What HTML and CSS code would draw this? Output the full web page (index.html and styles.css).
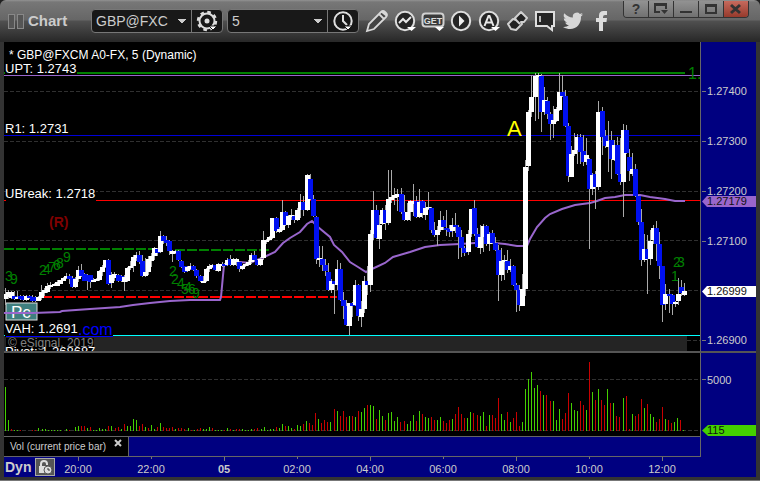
FILE: index.html
```html
<!DOCTYPE html>
<html lang="en">
<head>
<meta charset="utf-8">
<title>Chart</title>
<link rel="stylesheet" href="styles.css">
</head>
<body>
<main class="window">
  <header class="titlebar">
    <div class="brand"><span class="grip"></span><span class="grip"></span><h1>Chart</h1></div>
    <div class="combo">
      <select class="combo-select" aria-label="Symbol"><option>GBP@FXC</option></select>
      <button class="combo-button" aria-label="Symbol settings">
        <svg width="24" height="22" viewBox="0 0 24 22"><circle cx="12" cy="11" r="7.5" fill="none" stroke="#ddd" stroke-width="2"/><circle cx="12" cy="11" r="9" fill="none" stroke="#ddd" stroke-width="2.4" stroke-dasharray="3.6 3.47"/><circle cx="12" cy="11" r="2.5" fill="#ddd"/><path d="M14 16h8l-4 4z" fill="#fff" stroke="#181818"/></svg>
      </button>
    </div>
    <div class="combo">
      <select class="combo-select" aria-label="Interval"><option>5</option></select>
      <button class="combo-button" aria-label="Time template">
        <svg width="24" height="22" viewBox="0 0 24 22"><circle cx="12" cy="11" r="8.7" fill="none" stroke="#e0e0e0" stroke-width="2"/><path d="M12 5v6l4 4" fill="none" stroke="#e0e0e0" stroke-width="2"/><path d="M13 16h8l-4 4z" fill="#fff" stroke="#181818"/></svg>
      </button>
    </div>
    <nav class="tools" aria-label="Chart tools">
      <button class="tool" aria-label="Draw"><svg width="24" height="24" viewBox="0 0 24 24"><path d="M2 22l2-7L16 3q2-2 4 0l1 1q2 2 0 4L9 20zM14 5l5 5M17 3l5 4" fill="#444" stroke="#d8d8d8" stroke-width="1.8"/></svg></button>
      <button class="tool" aria-label="Studies"><svg width="24" height="24" viewBox="0 0 24 24"><circle cx="12" cy="12" r="9.2" fill="#252525" stroke="#ddd" stroke-width="2"/><path d="M6 14l4-4 3 3 5-5" fill="none" stroke="#e8e8e8" stroke-width="2"/><path d="M14 18h9l-4.500 4z" fill="#fff"/></svg></button>
      <button class="tool" aria-label="Advanced GET"><svg width="24" height="24" viewBox="0 0 24 24"><rect x="1.500" y="4.500" width="21" height="13" rx="3" fill="#3a3a3a" stroke="#d0d0d0" stroke-width="2"/><text x="12" y="15" text-anchor="middle" class="get-mark">GET</text><path d="M14 18h9l-4.500 4z" fill="#fff"/></svg></button>
      <button class="tool" aria-label="Play"><svg width="24" height="24" viewBox="0 0 24 24"><circle cx="12" cy="12" r="9.2" fill="#252525" stroke="#ddd" stroke-width="2"/><path d="M10 6.500l5.500 5.500-5.500 5.500z" fill="#eee"/></svg></button>
      <button class="tool" aria-label="Alerts"><svg width="24" height="24" viewBox="0 0 24 24"><circle cx="12" cy="12" r="9.200" fill="#252525" stroke="#ddd" stroke-width="2"/><path d="M7.500 17L11.500 7h1l4 10M9 13.500h6" fill="none" stroke="#e8e8e8" stroke-width="2"/><path d="M14 18h9l-4.500 4z" fill="#fff"/></svg></button>
      <button class="tool" aria-label="Scroll direction"><svg width="24" height="24" viewBox="0 0 24 24"><path d="M3 15l5-5 3 1-1-2 6-6 6 6-3 4h-3l1 2-6 6-5-1z" fill="#222" stroke="#d0d0d0" stroke-width="2" stroke-linejoin="round"/><path d="M11 11l4 4" stroke="#d0d0d0" stroke-width="2"/></svg></button>
      <button class="tool" aria-label="Notes"><svg width="24" height="24" viewBox="0 0 24 24"><path d="M3 3h18v14h-2v4l-5-4H3z" fill="#252525" stroke="#ddd" stroke-width="2"/><path d="M7 7v6" stroke="#eee" stroke-width="1.500"/></svg></button>
      <button class="tool" aria-label="Twitter"><svg width="24" height="24" viewBox="0 0 24 24"><path d="M22 5.500c-.8.300-1.500.5-2.300.6.800-.5 1.500-1.300 1.800-2.200-.8.500-1.700.8-2.600 1a4.100 4.100 0 0 0-7 3.700C8.500 8.400 5.500 6.800 3.400 4.300a4.100 4.100 0 0 0 1.300 5.500c-.7 0-1.300-.2-1.900-.5 0 2 1.400 3.700 3.300 4.100-.6.200-1.200.2-1.900.1.500 1.600 2 2.800 3.800 2.800A8.300 8.300 0 0 1 2 18c10 5.500 18.500-1 18-10.500.8-.5 1.500-1.200 2-2z" fill="#d6d6d6"/></svg></button>
      <button class="tool" aria-label="Facebook"><svg width="24" height="24" viewBox="0 0 24 24"><path d="M10 22v-9H7V9h3V6.500Q10 2 14.500 2H18v4h-2q-2 0-2 2v1h4l-.500 4H14v9z" fill="#ddd"/></svg></button>
    </nav>
    <div class="window-buttons">
      <button class="wbtn" aria-label="Help">?</button>
      <button class="wbtn" aria-label="Undock"><svg width="14" height="12" viewBox="0 0 14 12"><path d="M6 9H1V1h11v5M1 2h11" fill="none" stroke="#333" stroke-width="2"/><path d="M7 7h7l-3.500 4z" fill="#333"/></svg></button>
      <button class="wbtn" aria-label="Minimize"><svg width="14" height="12" viewBox="0 0 14 12"><path d="M1 9h12" stroke="#333" stroke-width="2"/></svg></button>
      <button class="wbtn" aria-label="Maximize"><svg width="14" height="12" viewBox="0 0 14 12"><path d="M2 2h10v8H2zM2 3h10" fill="none" stroke="#333" stroke-width="2"/></svg></button>
      <button class="wbtn close" aria-label="Close"><svg width="14" height="12" viewBox="0 0 14 12"><path d="M2 2l9 8M11 2l-9 8" stroke="#333" stroke-width="3"/></svg></button>
    </div>
  </header>

  <section class="chart">
    <svg class="price-plot" role="img" aria-label="Price chart">
      <g transform="translate(-4 -42)">
        <rect x="4" y="336" width="683" height="15" fill="#242424"/>
        <g class="grid"><path d="M4 91.500H2000M4 141.500H2000M4 191.500H2000M4 240.500H2000M4 290.500H2000M687 340.500H2000"/></g>
        <path d="M4 135.500H2000" stroke="#0000d8"/>
        <path d="M4 75.500H2000" stroke="#9966cc"/>
        <path d="M4 73H685" stroke="#008000" stroke-width="2"/>
        <path d="M4 200.500H2000" stroke="#f00"/>
        <path d="M4 335.500H2000" stroke="#0ff"/>
        <path d="M4 249H157M175 250H269" stroke="#008000" stroke-width="2" stroke-dasharray="10 2"/>
        <path d="M42 297H337" stroke="#f00" stroke-width="2" stroke-dasharray="10 2"/>
        <rect x="6" y="303" width="31" height="17" fill="#3f7f7f" stroke="#ddd"/>
        <text x="11" y="318" class="pc">Pc</text>
        <polyline class="average" points="4,313 33,313 60,312 62,311 90,309 120,307 133,305 150,303 170,301 190,300 220,300 221,297 224,265 230,262 240,262 250,263 262,258 275,252 283,243 290,238 300,232 307,224 312,221 318,227 330,237 334,245 342,252 350,262 358,267 366,272 372,269 385,263 393,257 410,252 425,247 440,245 460,244 475,243 495,243 505,244 517,246 527,246 530,239 537,227 545,218 550,214 562,209 575,205 590,203 597,201 605,198 615,197 625,195 640,195 650,197 665,199 675,201 685,201"/>
        <g id="candles" shape-rendering="crispEdges"></g>
        <g class="count">
          <text x="5" y="281">3</text><text x="10" y="284">9</text>
          <text x="39" y="275">2</text><text x="43" y="274">4</text><text x="48" y="272">7</text><text x="53" y="270">6</text><text x="56" y="268">8</text><text x="63" y="262">9</text>
          <text x="169" y="276">2</text><text x="171" y="284">2</text><text x="177" y="288">4</text><text x="181" y="294">5</text><text x="184" y="292">4</text><text x="188" y="294">6</text><text x="192" y="298">9</text>
          <text x="673" y="267">2</text><text x="677" y="267">3</text><text x="671" y="281">1</text>
        </g>
        <text x="688" y="79" class="count-end">1.</text>
        <text x="49" y="227" class="range">(R)</text>
        <text x="507" y="136" class="wave">A</text>
        <rect x="5" y="61" width="72" height="14"/>
        <rect x="6" y="186" width="90" height="16"/>
        <rect x="5" y="321" width="108" height="16"/>
        <rect x="6" y="338" width="88" height="13"/>
        <g class="level">
          <text x="9" y="59" class="heading">* GBP@FXCM A0-FX, 5 (Dynamic)</text>
          <text x="5" y="73">UPT: 1.2743</text>
          <text x="5" y="133">R1: 1.2731</text>
          <text x="5" y="198">UBreak: 1.2718</text>
          <text x="5" y="333">VAH: 1.2691</text>
          <text x="5" y="356">Pivot: 1.268687</text>
        </g>
        <a href="#site"><text x="78" y="335" class="site">.com</text><path d="M6 336.500H113" stroke="#00f"/></a>
        <text x="8" y="347" class="copyright">© eSignal, 2019</text>
      </g>
    </svg>
    <svg class="price-axis" role="img" aria-label="Price axis">
      <g transform="translate(-701 -42)">
        <path d="M702 91.500h4M702 141.500h4M702 191.500h4M702 241.500h4M702 340.500h4" stroke="#777"/>
        <g class="scale">
          <text x="707" y="95">1.27400</text><text x="707" y="145">1.27300</text><text x="707" y="195">1.27200</text><text x="707" y="245">1.27100</text><text x="707" y="344">1.26900</text>
        </g>
        <path d="M702 201.500l5-5.500h2000v11h-2000z" fill="#9966cc"/>
        <path d="M702 291.500l5-5.500h2000v11h-2000z" fill="#fff"/>
        <g class="scale dark"><text x="707" y="205">1.27179</text><text x="707" y="295">1.26999</text></g>
      </g>
    </svg>
    <svg class="volume-plot" role="img" aria-label="Volume">
      <g transform="translate(-4 -353)">
        <g class="grid"><path d="M4 379.500H2000M4 430.500H2000"/></g>
        <g id="volume" shape-rendering="crispEdges"></g>
      </g>
    </svg>
    <svg class="volume-axis" role="img" aria-label="Volume axis">
      <g transform="translate(-701 -353)">
        <path d="M702 379.500h4" stroke="#777"/>
        <path d="M702 430.500l6-5.500h2000v11h-2000z" fill="#44d000"/>
        <text x="707" y="384" class="scale">5000</text><text x="707" y="434" class="scale dark">115</text>
      </g>
    </svg>
    <div class="tabs"><div class="tab"><span>Vol (current price bar)</span><button class="tab-close" aria-label="Remove study"><svg width="8" height="8" viewBox="0 0 8 8"><path d="M1 1l6 6M7 1L1 7" stroke="#ccc" stroke-width="2"/></svg></button></div></div>
    <div class="axis-fill"></div>
  </section>

  <footer class="timebar">
    <strong class="mode">Dyn</strong>
    <button class="lock" aria-label="Lock time"><svg width="16" height="16" viewBox="0 0 16 16"><path d="M4 7V5q0-3 3-3t3 3v1" fill="none" stroke="#ddd" stroke-width="2"/><rect x="2" y="7" width="8" height="7" fill="#ddd"/><circle cx="11" cy="11" r="4" fill="#ddd" stroke="#555"/><path d="M11 9v2h2" fill="none" stroke="#333"/></svg></button>
    <svg class="times" role="img" aria-label="Time axis"><g id="times" transform="translate(-55 -457)"></g></svg>
  </footer>
</main>
<script src="chart.js"></script>
</body>
</html>
```
FILE: styles.css
```css
* { box-sizing: border-box; }
html { height: 100%; background: #202020; }
body { margin: 0; height: 100%; font-family: "Liberation Sans", Arial, sans-serif; }
button, select { font: inherit; border: 0; padding: 0; margin: 0; background: none; color: inherit; }
svg { display: block; }

.window { display: flex; flex-direction: column; min-height: 100%; background: #333; border-bottom: 1px solid #777; border-radius: 6px 6px 0 0; overflow: hidden; }

.titlebar { display: flex; align-items: center; height: 42px; padding-right: 11px; background: linear-gradient(#929292 0, #777 2px, #666 20px, #505050 21px, #292929 41px); }
.brand { display: flex; align-items: center; gap: 2px; width: 91px; padding-left: 8px; }
.grip { width: 7px; height: 15px; border: 1px solid #888; background: #555; }
.brand h1 { margin: 0 0 0 2px; font-size: 15px; line-height: 20px; color: #ccc; }
.combo { display: flex; width: 132px; height: 24px; margin-right: 4px; border: 1px solid #777; border-radius: 4px; background: #181818; overflow: hidden; }
.combo-select { flex: 1; min-width: 0; padding: 0 4px; appearance: none; color: #ccc; font-size: 14px; background: linear-gradient(to bottom right, #ccc 50%, transparent 51%) 90px 9px / 4px 4px no-repeat, linear-gradient(to bottom left, #ccc 50%, transparent 51%) 86px 9px / 4px 4px no-repeat; }
.combo-button { display: flex; align-items: center; justify-content: center; width: 31px; border-left: 1px solid #777; }
.tools { display: flex; }
.tool { display: flex; align-items: center; justify-content: center; width: 28px; height: 28px; }
.get-mark { font-size: 9px; font-weight: bold; fill: #ddd; }
.window-buttons { display: flex; align-self: flex-start; margin: 1px 0 0 auto; border: 1px solid #333; border-top: 0; border-radius: 0 0 4px 4px; overflow: hidden; }
.wbtn { display: flex; align-items: center; justify-content: center; width: 25px; height: 16px; border-right: 1px solid #333; background: linear-gradient(#929292, #717171); color: #333; font-size: 14px; font-weight: bold; line-height: 16px; }
.close { width: 24px; border-right: 0; background: linear-gradient(#c66a5d, #963a2c); }

.chart { display: grid; grid-template-columns: minmax(0, 1fr) 55px; margin: 0 4px; }
.price-plot, .price-axis { width: 100%; height: 311px; border-bottom: 2px solid #555; }
.volume-plot, .volume-axis { width: 100%; height: 83px; }
.price-plot, .volume-plot { background: #000; border-right: 1px solid #666; }
.price-axis, .volume-axis, .axis-fill { background: #000080; }
.tabs { display: flex; height: 21px; border: solid #666; border-width: 1px 1px 1px 0; background: #000080; }
.tab { display: flex; gap: 8px; width: 125px; padding-left: 6px; border-right: 1px solid #666; background: #000; color: #ccc; font-size: 10px; line-height: 20px; white-space: nowrap; }
.tab-close { align-self: flex-start; margin-top: 2px; }
.timebar { display: flex; align-items: center; height: 20px; margin: 0 4px 3px; background: #000080; color: #ccc; }
.mode { width: 31px; padding-left: 1px; font-size: 14px; line-height: 20px; }
.lock { display: flex; align-items: center; justify-content: center; width: 20px; height: 18px; border: 1px solid #aaa; background: #555; }
.times { flex: 1; height: 20px; }

.price-plot path, .volume-plot path { fill: none; }
.grid { stroke: #303030; stroke-dasharray: 4 2; }
.average { fill: none; stroke: #9966cc; stroke-width: 2; }
.wick { fill: #aaa; }
.up { fill: #fff; }
.down { fill: #0010f0; }
.buy { fill: #44d000; }
.sell { fill: #c80000; }
.tick { fill: #777; }
.level { fill: #fff; font-size: 13px; }
.heading { font-size: 12px; }
.count { fill: #008000; font-size: 14px; }
.count-end { fill: #008000; font-size: 16px; }
.range { fill: #800000; font-size: 14px; font-weight: bold; }
.wave { fill: #ff0; font-size: 22px; }
.pc { fill: #fff; font-size: 17px; }
.site { fill: #00f; font-size: 16px; }
.copyright { fill: #808080; font-size: 12px; }
.scale, .time { fill: #ccc; font-size: 11px; }
.dark { fill: #111; }
.time { text-anchor: middle; }
.day { font-weight: bold; }
```
FILE: chart.js
```js
// Candle rows: x, high, body top, body bottom, low, direction (1 up, 0 down)
const candles = `
5 288 294 299 305 1;8 290 292 297 299 1;11 291 292 298 299 1;14 291 296 299 300 0;17 291 297 299 299 1;20 295 296 299 300 0;23 295 296 300 301 0;26 295 296 300 301 1;29 295 296 298 299 0;32 295 297 301 302 0;35 296 297 301 302 0;38 296 297 301 301 1;41 285 292 298 300 1;44 288 290 293 296 1;47 283 286 292 293 1;50 282 285 287 289 1;54 283 284 286 286 1;57 280 282 286 286 1;60 280 280 284 284 1;63 277 278 281 281 1;66 273 276 278 279 1;69 274 276 279 284 0;72 276 278 287 288 0;75 277 279 287 288 1;78 266 270 279 282 1;81 264 270 276 277 0;84 273 274 281 281 0;87 274 275 281 290 0;90 275 275 282 288 0;93 278 280 282 282 1;96 278 279 281 281 1;99 270 271 280 281 1;102 265 267 272 276 1;105 260 260 267 268 1;108 259 260 284 285 0;111 272 275 283 288 1;114 272 274 278 281 1;118 274 275 281 282 0;121 275 276 281 282 0;124 275 277 282 291 1;127 267 268 281 282 1;130 261 266 268 270 1;
133 255 257 266 272 1;136 252 255 258 261 1;139 251 255 262 264 0;142 255 261 276 277 0;145 258 272 276 277 1;148 256 259 272 275 1;151 253 256 261 267 1;154 247 248 256 260 1;157 248 249 253 256 0;160 231 236 252 253 1;163 235 236 241 244 0;166 236 240 243 246 0;169 240 241 251 255 0;172 250 251 254 262 1;175 250 251 253 254 1;178 250 251 260 261 0;181 260 261 267 268 0;184 266 266 272 273 0;187 266 267 271 272 1;190 263 266 269 270 1;193 265 266 270 271 0;196 269 270 276 278 0;200 275 276 281 282 0;203 276 281 283 283 1;206 268 269 281 282 1;209 264 266 269 272 1;212 264 265 267 268 1;215 265 265 270 271 0;218 263 264 271 272 1;222 262 264 266 267 1;224 263 264 266 267 0;227 258 260 265 266 1;230 255 259 265 266 0;233 258 259 265 266 1;236 258 259 262 266 1;239 261 262 269 272 0;242 265 266 269 270 1;245 263 264 266 267 1;248 260 262 265 266 1;251 253 255 262 264 1;254 251 255 260 261 0;257 259 260 265 266 0;260 257 259 265 266 1;
263 231 240 258 260 1;266 239 240 242 244 1;269 236 237 240 241 1;272 218 218 238 239 1;276 217 218 231 233 0;279 227 229 232 233 1;282 200 212 230 231 1;285 211 212 225 226 0;288 215 216 225 228 1;291 209 215 217 220 1;294 215 216 220 223 0;297 208 210 220 221 1;300 194 202 210 218 1;303 196 202 210 216 0;307 174 175 210 211 1;
310 174 179 199 200 0;313 195 199 216 217 0;316 216 217 259 264 0;319 246 258 260 267 1;322 246 259 265 271 0;325 259 265 271 276 0;328 263 272 290 291 0;331 279 281 290 293 1;334 281 281 284 314 0;337 260 269 285 290 1;340 263 269 300 301 0;343 292 300 306 319 0;346 300 306 325 326 0;349 303 303 326 335 1;352 302 303 306 317 0;355 280 285 305 306 1;358 284 285 316 321 0;361 301 309 317 327 1;364 276 281 309 313 1;367 266 281 285 295 0;370 230 234 285 292 1;373 191 210 234 240 1;376 205 210 238 239 0;379 215 225 239 249 1;382 208 210 224 225 1;385 205 210 223 230 0;388 170 199 223 225 1;391 170 197 200 203 1;394 188 195 198 205 1;397 189 194 197 211 1;401 188 194 212 214 0;404 195 212 220 221 0;407 203 212 220 221 1;410 200 201 212 221 1;413 184 201 204 216 1;416 196 201 217 218 0;419 189 202 217 218 1;422 200 201 213 218 0;425 202 208 215 220 1;428 192 207 209 210 1;431 207 208 230 233 0;434 222 230 235 237 0;437 226 230 235 246 1;440 211 220 230 232 1;443 216 220 227 230 0;446 210 228 230 236 0;449 225 229 232 237 0;452 218 225 231 237 1;455 213 225 227 233 0;458 225 227 237 259 0;461 230 237 248 257 0;464 246 248 253 256 0;468 230 234 252 255 1;471 209 209 234 237 1;474 200 208 234 236 0;477 228 234 247 248 0;480 225 237 248 254 1;483 224 226 237 252 1;486 225 226 244 246 0;489 232 234 244 251 1;492 230 233 243 244 0;495 237 243 250 251 0;498 245 250 275 301 0;501 248 261 275 281 1;504 255 260 262 280 1;507 250 261 270 273 0;510 259 266 270 272 1;513 265 266 285 286 0;516 283 285 290 312 0;519 285 290 305 311 0;522 274 289 306 306 1;
525 160 167 289 296 1;528 110 112 166 171 1;531 75 97 112 117 1;535 73 76 97 121 1;538 73 75 77 119 1;541 74 76 112 132 0;544 87 100 112 115 1;547 97 101 114 119 0;550 112 114 124 140 0;553 106 120 124 138 1;556 107 109 121 122 1;559 73 92 110 111 1;562 75 92 96 97 0;565 90 96 126 127 0;568 123 126 176 182 0;571 146 154 177 177 1;574 133 150 154 156 1;577 134 137 150 164 1;580 134 137 152 164 0;583 135 151 162 166 0;586 138 155 162 165 1;589 158 159 189 249 0;592 173 175 189 195 1;595 171 174 187 209 0;598 101 112 187 190 1;602 107 111 137 155 0;605 130 136 146 148 0;608 121 141 147 172 1;611 131 140 159 179 0;614 140 145 160 161 1;617 137 145 174 175 0;620 138 174 182 185 0;623 124 130 182 217 1;626 125 130 153 154 0;629 149 157 171 181 0;632 153 169 174 176 1;635 164 169 196 197 0;638 195 196 222 225 0;641 209 222 260 266 0;644 234 249 260 262 1;647 235 249 259 294 0;650 230 241 259 265 1;653 225 228 240 244 1;656 221 228 244 261 0;659 232 244 266 279 0;662 266 266 305 322 0;665 284 294 304 310 1;669 289 294 296 313 0;672 294 295 304 315 0;675 301 302 304 307 1;678 278 294 301 305 1;681 280 287 293 296 0;684 283 291 295 296 1`;

// Bar heights in time order; a negative height is a falling bar
const volumes = [
  44,11,-2,1,1,-1,0,0,0,-1,-1,3,2,2,1,1,1,1,1,0,2,-1,0,4,5,-5,-5,3,-4,1,1,3,2,2,-5,5,-3,-4,2,-7,5,5,
  12,11,-5,-7,4,-3,6,2,-4,8,-4,-3,-3,-4,2,-3,-3,-2,3,-1,1,-2,-3,2,2,4,-3,1,1,1,-1,3,-2,1,-2,-2,2,1,1,2,-2,-3,
  2,4,1,2,2,-4,3,7,-5,5,3,-2,6,5,-7,10,-8,-6,-18,12,-8,-11,-9,9,-22,20,-15,-20,-14,15,-15,14,-20,19,23,-26,26,25,-12,21,15,-11,18,19,10,14,-9,-10,7,10,16,-10,20,-17,14,13,-14,-11,11,14,-10,-8,-11,12,-17,-24,-17,-13,13,19,-18,-16,15,19,-5,16,-16,-13,-33,17,11,-19,
  9,-13,-19,-5,9,42,52,59,43,46,-40,36,-36,-30,30,11,22,-12,-18,-38,28,21,20,-30,-26,21,-69,39,-31,42,-31,-26,42,-28,28,-15,-14,33,-35,-2,17,-15,-17,-32,23,-27,17,14,-9,-12,-24,12,-11,-8,9,13,-11,1
];

const rect = (x, y, w, h, cls) => `<rect x="${x}" y="${y}" width="${w}" height="${h}" class="${cls}"/>`;

document.getElementById('candles').innerHTML = candles.trim().split(';').map(row => {
  const [x, hi, top, bottom, lo, up] = row.trim().split(' ').map(Number);
  return rect(x, hi, 1, lo - hi, 'wick') + rect(x - 2, top, 5, bottom - top, up ? 'up' : 'down');
}).join('');

document.getElementById('volume').innerHTML = volumes.map((v, i) =>
  rect(Math.round(5 + i * 3.042), 431 - Math.abs(v), 1, Math.abs(v), v > 0 ? 'buy' : 'sell')).join('');

document.getElementById('times').innerHTML =
  ['20:00', '22:00', '05', '02:00', '04:00', '06:00', '08:00', '10:00', '12:00'].map((t, i) => {
    const x = 78 + i * 73;
    return rect(x, 457, 1, i % 2 ? 2 : 4, 'tick') +
      `<text x="${x}" y="473" class="time${t === '05' ? ' day' : ''}">${t}</text>`;
  }).join('');
```
